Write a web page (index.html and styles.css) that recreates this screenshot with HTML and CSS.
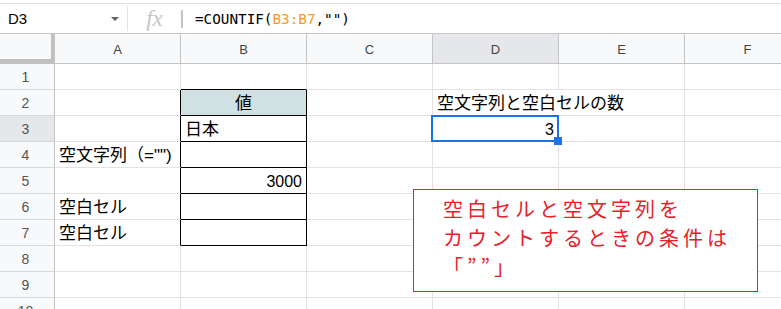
FILE: index.html
```html
<!DOCTYPE html>
<html lang="ja">
<head>
    <meta charset="UTF-8">
    <title>COUNTIF 空白セル</title>
    <link rel="stylesheet" href="styles.css">
</head>
<body>
    <!-- Formula bar -->
    <div class="formula-bar">
        <div class="name-box">
            <span class="cell-ref">D3</span>
            <span class="caret"></span>
        </div>
        <div class="divider"></div>
        <div class="fx">fx</div>
        <div class="divider short"></div>
        <div class="formula">=COUNTIF(<span class="range">B3:B7</span>,"")</div>
    </div>

    <!-- Sheet grid -->
    <div class="sheet">
        <div class="grid">
            <div class="corner"></div>
            <div class="col-head">A</div>
            <div class="col-head">B</div>
            <div class="col-head">C</div>
            <div class="col-head active">D</div>
            <div class="col-head">E</div>
            <div class="col-head">F</div>

            <div class="row-head">1</div>
            <div class="cell"></div>
            <div class="cell edge-bottom"></div>
            <div class="cell"></div>
            <div class="cell"></div>
            <div class="cell"></div>
            <div class="cell"></div>

            <div class="row-head">2</div>
            <div class="cell edge-right"></div>
            <div class="cell boxed header-cell">値</div>
            <div class="cell"></div>
            <div class="cell no-right">空文字列と空白セルの数</div>
            <div class="cell"></div>
            <div class="cell"></div>

            <div class="row-head active">3</div>
            <div class="cell edge-right"></div>
            <div class="cell boxed">日本</div>
            <div class="cell"></div>
            <div class="cell num">3</div>
            <div class="cell"></div>
            <div class="cell"></div>

            <div class="row-head">4</div>
            <div class="cell edge-right">空文字列（="")</div>
            <div class="cell boxed"></div>
            <div class="cell"></div>
            <div class="cell"></div>
            <div class="cell"></div>
            <div class="cell"></div>

            <div class="row-head">5</div>
            <div class="cell edge-right"></div>
            <div class="cell boxed num">3000</div>
            <div class="cell"></div>
            <div class="cell"></div>
            <div class="cell"></div>
            <div class="cell"></div>

            <div class="row-head">6</div>
            <div class="cell edge-right">空白セル</div>
            <div class="cell boxed"></div>
            <div class="cell"></div>
            <div class="cell"></div>
            <div class="cell"></div>
            <div class="cell"></div>

            <div class="row-head">7</div>
            <div class="cell edge-right">空白セル</div>
            <div class="cell boxed"></div>
            <div class="cell"></div>
            <div class="cell"></div>
            <div class="cell"></div>
            <div class="cell"></div>

            <div class="row-head">8</div>
            <div class="cell"></div>
            <div class="cell"></div>
            <div class="cell"></div>
            <div class="cell"></div>
            <div class="cell"></div>
            <div class="cell"></div>

            <div class="row-head">9</div>
            <div class="cell"></div>
            <div class="cell"></div>
            <div class="cell"></div>
            <div class="cell"></div>
            <div class="cell"></div>
            <div class="cell"></div>

            <div class="row-head">10</div>
            <div class="cell"></div>
            <div class="cell"></div>
            <div class="cell"></div>
            <div class="cell"></div>
            <div class="cell"></div>
            <div class="cell"></div>
        </div>

        <!-- Active cell outline (D3) -->
        <div class="selection"><span class="handle"></span></div>

        <!-- Floating note -->
        <div class="note">
            空白セルと空文字列を<br>
            カウントするときの条件は<br>
            「””」
        </div>
    </div>
</body>
</html>
```

FILE: styles.css
```css
/* General */
html, body {
    margin: 0;
    padding: 0;
    overflow: hidden;
    background-color: #fff;
}

body {
    font-family: 'Liberation Sans', Arial, 'Noto Sans CJK JP', sans-serif;
    color: #000;
}

/* Formula bar */
.formula-bar {
    display: flex;
    align-items: center;
    height: 29px;
    margin-top: 3px;
    border-top: 1px solid #e1e1e1;
    border-bottom: 1px solid #c7c7c7;
}

.name-box {
    display: flex;
    align-items: center;
    width: 127px;
    padding-left: 8px;
    box-sizing: border-box;
}

.cell-ref {
    font-size: 15px;
    flex: 1;
}

.caret {
    width: 0;
    height: 0;
    margin-right: 8px;
    border-left: 4px solid transparent;
    border-right: 4px solid transparent;
    border-top: 4px solid #5f6368;
}

.divider {
    width: 1px;
    height: 25px;
    background-color: #e3e3e3;
}

.divider.short {
    width: 2px;
    height: 18px;
    background-color: #c4c4c4;
}

.fx {
    width: 53px;
    text-align: center;
    font-family: 'Liberation Serif', serif;
    font-style: italic;
    font-size: 23px;
    color: #c6c6c6;
    line-height: 1;
}

.formula {
    margin-left: 12px;
    font-family: 'DejaVu Sans Mono', monospace;
    font-size: 14.3px;
}

.range {
    color: #f29b26;
}

/* Sheet grid */
.sheet {
    position: relative;
}

.grid {
    display: grid;
    grid-template-columns: 55px repeat(6, 126px);
    grid-template-rows: 30px repeat(10, 26px);
}

.corner {
    background-color: #f8f9fa;
    border-right: 4px solid #c0c0c0;
    border-bottom: 5px solid #c0c0c0;
}

.col-head {
    display: flex;
    align-items: center;
    justify-content: center;
    background-color: #f8f9fa;
    border-right: 1px solid #c4c4c4;
    border-bottom: 1px solid #c4c4c4;
    font-family: 'Liberation Sans', Arial, sans-serif;
    font-size: 13px;
    color: #444;
    padding-top: 1px;
}

.row-head {
    display: flex;
    align-items: center;
    justify-content: center;
    background-color: #f8f9fa;
    border-right: 1px solid #c4c4c4;
    border-bottom: 1px solid #d6d6d6;
    font-size: 14px;
    color: #555;
    padding-right: 3px;
}

.col-head.active,
.row-head.active {
    background-color: #e5e7ea;
}

.cell {
    display: flex;
    align-items: flex-end;
    padding: 0 4px 1px 4px;
    border-right: 1px solid #e2e2e2;
    border-bottom: 1px solid #e2e2e2;
    font-size: 17px;
    line-height: 20px;
    white-space: nowrap;
    min-width: 0;
}

.cell.num {
    justify-content: flex-end;
    font-size: 16px;
}

.cell.no-right {
    border-right-color: transparent;
}

.cell.edge-right {
    border-right-color: #000;
}

.cell.edge-bottom {
    border-bottom-color: #000;
}

.cell.boxed {
    border-right-color: #000;
    border-bottom-color: #000;
}

.header-cell {
    justify-content: center;
    background-color: #d0e0e3;
}

/* Active cell */
.selection {
    position: absolute;
    left: 431px;
    top: 81px;
    width: 128px;
    height: 27px;
    box-sizing: border-box;
    border: 2px solid #1a73e8;
}

.handle {
    position: absolute;
    right: -5px;
    bottom: -5px;
    width: 8px;
    height: 8px;
    background-color: #1a73e8;
}

/* Note box */
.note {
    position: absolute;
    left: 413px;
    top: 155px;
    width: 345px;
    height: 103px;
    box-sizing: border-box;
    padding: 4px 0 0 29px;
    background-color: #fff;
    border: 1px solid #e3262e;
    color: #e8202a;
    font-family: 'Noto Sans CJK JP', sans-serif;
    font-size: 20px;
    line-height: 29px;
    letter-spacing: 4px;
}
```
